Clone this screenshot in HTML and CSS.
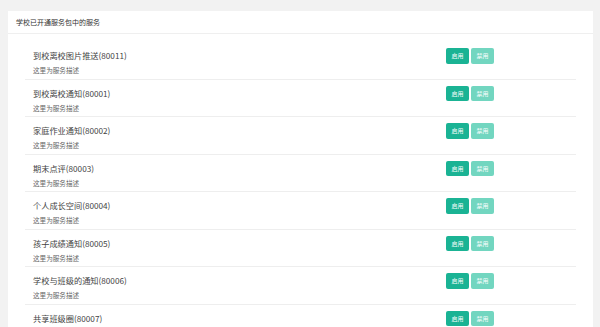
FILE: index.html
```html
<!DOCTYPE html>
<html lang="zh">
<head>
<meta charset="utf-8">
<link rel="stylesheet" href="styles.css">
</head>
<body>
<div class="card">
  <div class="card-head">学校已开通服务包中的服务</div>
  <div class="card-body">
    <div class="row">
      <div class="info"><div class="title">到校离校图片推送(80011)</div><div class="desc">这里为服务描述</div></div>
      <div class="actions"><span class="btn">启用</span><span class="btn light">禁用</span></div>
    </div>
    <div class="row">
      <div class="info"><div class="title">到校离校通知(80001)</div><div class="desc">这里为服务描述</div></div>
      <div class="actions"><span class="btn">启用</span><span class="btn light">禁用</span></div>
    </div>
    <div class="row">
      <div class="info"><div class="title">家庭作业通知(80002)</div><div class="desc">这里为服务描述</div></div>
      <div class="actions"><span class="btn">启用</span><span class="btn light">禁用</span></div>
    </div>
    <div class="row">
      <div class="info"><div class="title">期末点评(80003)</div><div class="desc">这里为服务描述</div></div>
      <div class="actions"><span class="btn">启用</span><span class="btn light">禁用</span></div>
    </div>
    <div class="row">
      <div class="info"><div class="title">个人成长空间(80004)</div><div class="desc">这里为服务描述</div></div>
      <div class="actions"><span class="btn">启用</span><span class="btn light">禁用</span></div>
    </div>
    <div class="row">
      <div class="info"><div class="title">孩子成绩通知(80005)</div><div class="desc">这里为服务描述</div></div>
      <div class="actions"><span class="btn">启用</span><span class="btn light">禁用</span></div>
    </div>
    <div class="row">
      <div class="info"><div class="title">学校与班级的通知(80006)</div><div class="desc">这里为服务描述</div></div>
      <div class="actions"><span class="btn">启用</span><span class="btn light">禁用</span></div>
    </div>
    <div class="row">
      <div class="info"><div class="title">共享班级圈(80007)</div><div class="desc">这里为服务描述</div></div>
      <div class="actions"><span class="btn">启用</span><span class="btn light">禁用</span></div>
    </div>
  </div>
</div>
</body>
</html>
```
FILE: styles.css
```css
html, body {
  margin: 0;
  padding: 0;
  background: #f2f2f2;
  font-family: "Noto Sans CJK SC", "Noto Sans", sans-serif;
  overflow: hidden;
}
body {
  padding: 11px 7px 0 8px;
}
.card {
  background: #fff;
}
.card-head {
  height: 23px;
  box-sizing: border-box;
  border-bottom: 1px solid #efefef;
  padding-left: 8px;
  font-size: 7px;
  line-height: 22px;
  color: #333;
}
.card-body {
  padding: 8px 17px 0 17px;
}
.row {
  display: flex;
  align-items: flex-start;
  height: 37.5px;
  box-sizing: border-box;
  border-bottom: 1px solid #eeeeee;
  padding-left: 8px;
}
.info {
  flex: 1;
}
.title {
  margin-top: 9px;
  font-size: 8.2px;
  line-height: 9px;
  color: #444;
}
.desc {
  margin-top: 6px;
  font-size: 6.6px;
  line-height: 8px;
  color: #666;
}
.actions {
  display: flex;
  gap: 2px;
  margin-top: 6px;
  margin-right: 82px;
}
.btn {
  width: 23px;
  height: 15.5px;
  border-radius: 2px;
  background: #1ab394;
  color: #fff;
  font-size: 6px;
  line-height: 15.5px;
  text-align: center;
}
.btn.light {
  background: #72d6c0;
}
```
